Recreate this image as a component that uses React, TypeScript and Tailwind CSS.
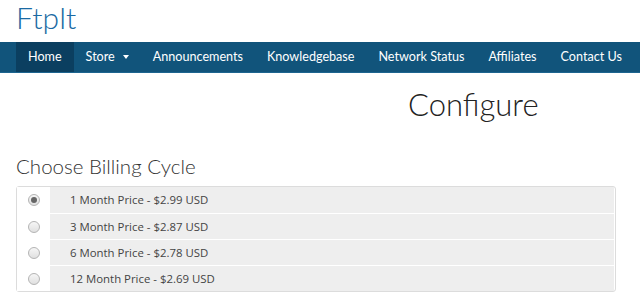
const navItems = [
  { label: "Home", active: true },
  { label: "Store", caret: true },
  { label: "Announcements" },
  { label: "Knowledgebase" },
  { label: "Network Status" },
  { label: "Affiliates" },
  { label: "Contact Us" },
];

const cycles = [
  { label: "1 Month Price - $2.99 USD", checked: true },
  { label: "3 Month Price - $2.87 USD" },
  { label: "6 Month Price - $2.78 USD" },
  { label: "12 Month Price - $2.69 USD" },
];

const Radio = ({ checked }: { checked?: boolean }) => (
  <span className="flex h-[12px] w-[12px] items-center justify-center rounded-full border border-[#b4b4b4] bg-gradient-to-b from-[#f6f6f6] to-[#e0e0e0]">
    {checked && <span className="h-[6px] w-[6px] rounded-full bg-[#666]" />}
  </span>
);

const App = () => {
  return (
    <div className="h-[302px] w-[640px] overflow-hidden bg-white font-['Lato',sans-serif]">
      <header className="px-4 h-[42px]">
        <div className="text-[30px] leading-[34px] font-light text-[#1a6aa3]">FtpIt</div>
      </header>

      <nav className="flex h-[31px] bg-[#11547b] border-b border-[#1d6590] pl-4">
        {navItems.map((item) => (
          <div
            key={item.label}
            className={`flex shrink-0 items-center whitespace-nowrap px-3 text-[12.6px] text-white ${
              item.active ? "bg-[#0b3f60]" : ""
            }`}
          >
            {item.label}
            {item.caret && (
              <span className="ml-[8px] inline-block h-0 w-0 border-x-[3.5px] border-t-[4px] border-x-transparent border-t-white" />
            )}
          </div>
        ))}
      </nav>

      <div className="px-4">
        <h1 className="pl-[392px] pt-[13px] text-[31px] leading-[36px] font-light text-[#222]">
          Configure
        </h1>

        <h2 className="mt-[32px] text-[20.5px] leading-[24px] font-light text-[#333]">
          Choose Billing Cycle
        </h2>

        <div className="mt-[8px] w-[600px] rounded-[3px] border border-[#dcdcdc]">
          {cycles.map((c, i) => (
            <div
              key={c.label}
              className={`flex h-[26px] ${i > 0 ? "border-t border-white" : ""}`}
            >
              <div className="flex w-[33px] items-center justify-center bg-white">
                <Radio checked={c.checked} />
              </div>
              <div className="mr-[1px] flex flex-1 items-center bg-[#eeeeee] pl-[20px] font-['Open_Sans',sans-serif] text-[11.4px] text-[#444]">
                {c.label}
              </div>
            </div>
          ))}
        </div>
      </div>
    </div>
  );
};

export default App;
